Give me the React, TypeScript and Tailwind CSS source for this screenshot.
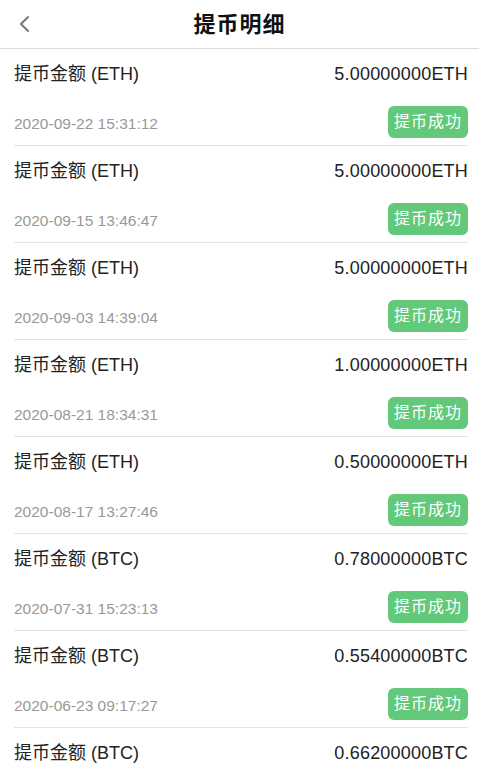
const rows = [
  { coin: 'ETH', amount: '5.00000000ETH', time: '2020-09-22 15:31:12' },
  { coin: 'ETH', amount: '5.00000000ETH', time: '2020-09-15 13:46:47' },
  { coin: 'ETH', amount: '5.00000000ETH', time: '2020-09-03 14:39:04' },
  { coin: 'ETH', amount: '1.00000000ETH', time: '2020-08-21 18:34:31' },
  { coin: 'ETH', amount: '0.50000000ETH', time: '2020-08-17 13:27:46' },
  { coin: 'BTC', amount: '0.78000000BTC', time: '2020-07-31 15:23:13' },
  { coin: 'BTC', amount: '0.55400000BTC', time: '2020-06-23 09:17:27' },
  { coin: 'BTC', amount: '0.66200000BTC' },
]

export default function App() {
  return (
    <div className="h-[774px] overflow-hidden bg-white font-['Liberation_Sans','Noto_Sans_CJK_SC',sans-serif] text-[#222]">
      <header className="relative flex h-[49px] items-center justify-center border-b border-[#dcdcdc]">
        <button className="absolute left-[14px] top-[11px] p-1 text-[#777]">
          <svg width="14" height="18" viewBox="0 0 14 18" fill="none" stroke="currentColor" strokeWidth="2" strokeLinecap="round" strokeLinejoin="round">
            <path d="M10 2 L3 9 L10 16" />
          </svg>
        </button>
        <h1 className="text-[22px] font-bold tracking-[1px] text-[#111]">提币明细</h1>
      </header>

      <ul className="pl-[14px] pr-[11px]">
        {rows.map((row, i) => (
          <li key={i} className="border-b border-[#e4e4e4]">
            <div className="flex h-[50px] items-center justify-between pt-[1px] text-[18px]">
              <span>提币金额 ({row.coin})</span>
              <span className="tracking-[0.2px]">{row.amount}</span>
            </div>
            {row.time && (
              <div className="flex h-[46px] items-center justify-between">
                <span className="mt-[3px] text-[15.5px] text-[#999]">{row.time}</span>
                <span className="mb-[1px] flex h-[32px] w-[80px] items-center justify-center rounded-[6px] bg-[#62c97a] text-[16px] tracking-[1px] text-white">
                  提币成功
                </span>
              </div>
            )}
          </li>
        ))}
      </ul>
    </div>
  )
}
